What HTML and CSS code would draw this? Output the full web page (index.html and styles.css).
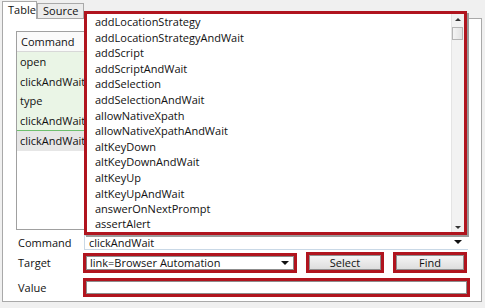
FILE: index.html
```html
<!DOCTYPE html>
<html lang="en">
<head>
  <meta charset="UTF-8">
  <title>Command Editor</title>
  <link rel="stylesheet" href="styles.css">
</head>
<body>
  <div class="tabs">
    <span class="tab active">Table</span>
    <span class="tab">Source</span>
  </div>

  <div class="panel">
    <div class="grid">
      <div class="grid-head">Command</div>
      <div class="row done">open</div>
      <div class="row done">clickAndWait</div>
      <div class="row done">type</div>
      <div class="row done last">clickAndWait</div>
      <div class="row current">clickAndWait</div>
    </div>

    <div class="field-row cmd-row">
      <label>Command</label>
      <div class="combo plain">clickAndWait<span class="arrow"></span></div>
    </div>
    <div class="field-row target-row">
      <label>Target</label>
      <div class="combo red">link=Browser Automation<span class="arrow"></span></div>
      <button class="btn select">Select</button>
      <button class="btn find">Find</button>
    </div>
    <div class="field-row value-row">
      <label>Value</label>
      <div class="input red"></div>
    </div>
  </div>

  <!-- command dropdown, open over the table -->
  <div class="dropdown">
    <ul class="options">
      <li>addLocationStrategy</li>
      <li>addLocationStrategyAndWait</li>
      <li>addScript</li>
      <li>addScriptAndWait</li>
      <li>addSelection</li>
      <li>addSelectionAndWait</li>
      <li>allowNativeXpath</li>
      <li>allowNativeXpathAndWait</li>
      <li>altKeyDown</li>
      <li>altKeyDownAndWait</li>
      <li>altKeyUp</li>
      <li>altKeyUpAndWait</li>
      <li>answerOnNextPrompt</li>
      <li>assertAlert</li>
    </ul>
    <div class="scrollbar">
      <span class="sb-up"></span>
      <span class="sb-thumb"></span>
      <span class="sb-down"></span>
    </div>
  </div>
</body>
</html>
```

FILE: styles.css
```css
body { margin: 0; width: 485px; height: 308px; overflow: hidden; position: relative; background: #f0f0f0; font-family: "Open Sans", "Noto Sans", sans-serif; font-size: 11px; color: #111; }

.tabs { display: flex; align-items: flex-end; height: 18px; padding-left: 2px; box-sizing: border-box; }
.tab { box-sizing: border-box; height: 15px; line-height: 13px; padding: 0 5px; border: 1px solid #a9a9a9; border-bottom: none; background: #ececec; }
.tab.active { width: 35px; height: 18px; line-height: 16px; background: #fff; position: relative; top: 1px; z-index: 1; }

.panel { box-sizing: border-box; width: 480px; height: 284px; margin-left: 2px; background: #fff; border: 1px solid #a9a9a9; padding: 12px 0 0 13px; }

.grid { box-sizing: border-box; width: 446px; height: 199px; border: 1px solid #a0a0a0; }
.grid-head { height: 19px; line-height: 19px; padding-left: 4px; border-bottom: 1px solid #d8d8d8; background: #fafafa; }
.row { height: 19.5px; line-height: 19.5px; padding-left: 3px; }
.row.done { background: #eaf5e6; }
.row.last { border-bottom: 1px solid #6fbf6f; }
.row.current { background: #e6e6e6; }

.field-row { display: flex; align-items: center; padding-left: 2px; }
.field-row label { width: 65px; }
.cmd-row { margin-top: 4px; height: 16px; }
.target-row { margin-top: 2px; height: 21px; }
.value-row { margin-top: 4px; height: 20px; }

.combo { box-sizing: border-box; position: relative; display: flex; align-items: center; padding-left: 4px; background: #fff; }
.combo.plain { width: 384px; height: 15px; margin-left: 1px; border: 1px solid #c9d8e6; border-right: none; }
.combo.red { width: 214px; height: 20px; }
.red { border: 3px solid #b0141e; box-shadow: inset 0 0 0 1px #8c8c8c; }
.arrow { position: absolute; right: 5px; top: 50%; margin-top: -2px; border: 4px solid transparent; border-top: 4px solid #111; border-bottom: none; }
.combo.plain .arrow { right: 6px; }

.btn { box-sizing: border-box; height: 21px; margin-left: 9px; padding: 0; font: inherit; color: #111; border: 3px solid #b0141e; background: linear-gradient(#f6f6f6, #dcdcdc); box-shadow: inset 0 0 0 1px #8e8e8e; }
.btn.select { width: 78px; }
.btn.find { width: 74px; margin-left: 9px; }

.input { box-sizing: border-box; width: 387px; height: 19px; background: #fff; }

.dropdown { position: absolute; left: 84px; top: 11px; width: 383px; height: 224px; box-sizing: border-box; display: flex; background: #fff; border: 3px solid #b0141e; box-shadow: 2px 2px 0 #9a9a9a; overflow: hidden; }
.options { flex: 1; list-style: none; margin: 0; padding: 0 0 0 8px; overflow: hidden; }
.options li { height: 15.6px; line-height: 15.6px; white-space: nowrap; }
.options li:last-child { height: 13px; line-height: 13px; }
.scrollbar { width: 12px; position: relative; background: #f2f2f2; border-left: 1px solid #e4e4e4; }
.sb-up, .sb-down { position: absolute; left: 3px; border: 3px solid transparent; }
.sb-up { top: 4px; border-bottom: 3px solid #333; border-top: none; }
.sb-down { bottom: 3px; border-top: 3px solid #333; border-bottom: none; }
.sb-thumb { position: absolute; left: 0; top: 13px; width: 11px; height: 13px; box-sizing: border-box; border: 1px solid #b5b5b5; background: linear-gradient(90deg, #f4f4f4, #e2e2e2); }
```
